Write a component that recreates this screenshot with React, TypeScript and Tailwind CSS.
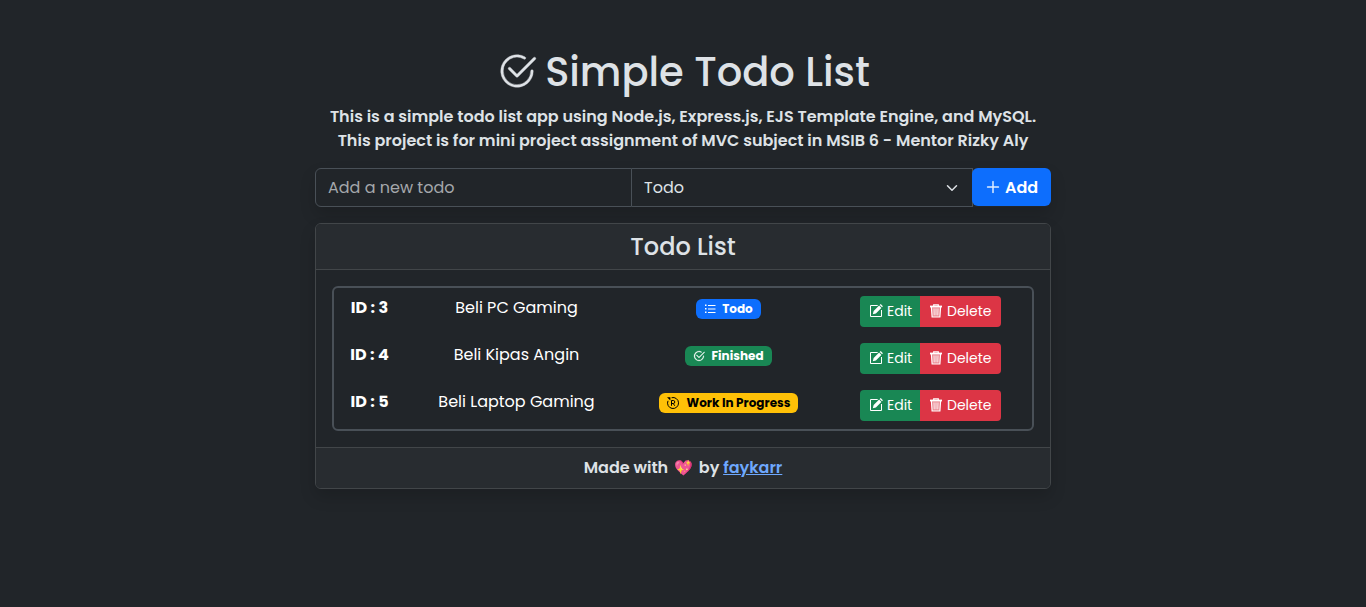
import type { ReactNode } from "react";
import { BsCheck2Circle, BsPlusLg } from "react-icons/bs";

function ProgressIcon() {
  return (
    <svg viewBox="0 0 14 14" className="h-3.5 w-3.5 -translate-x-px" fill="none" stroke="currentColor" strokeWidth="1">
      <path d="M5.6 1.7A5.5 5.5 0 1 1 2 4.8" />
      <path d="M1 1.3h3.4v3.2Z" fill="currentColor" stroke="none" />
      <path d="M5.5 9.8V4.5h1.8a1.5 1.5 0 0 1 0 3H5.5M7.2 7.5L8.8 9.8" />
    </svg>
  );
}

function ListIcon() {
  return (
    <svg viewBox="0 0 12 12" className="size-3" fill="currentColor">
      <path d="M1 1.5h1.5V3H1zM1 5h1.5v1.5H1zM1 8.5h1.5V10H1zM4 2h7.5v1H4zM4 5.5h7.5v1H4zM4 9h7.5v1H4z" />
    </svg>
  );
}

function EditIcon() {
  return (
    <svg viewBox="0 0 14 14" className="size-3.5" fill="none" stroke="currentColor" strokeWidth="1">
      <path d="M8.7 1.5H1.5v11h11V6" />
      <path d="m3.8 10.2.8-3.1L10.1 1.6l2.3 2.3L6.9 9.4Z" fill="currentColor" stroke="none" />
      <path d="m10.7 1 1-.9 2.2 2.2-.9 1Z" fill="currentColor" stroke="none" />
    </svg>
  );
}

function TrashIcon() {
  return (
    <svg viewBox="0 0 14 14" className="size-3.5" fill="none" stroke="currentColor" strokeWidth="1.2">
      <path d="M1 2.5h12" strokeWidth="1.8" />
      <path d="M4.7 2.3V.8h4.6v1.5" />
      <path d="m2.4 3 .7 10h7.8l.7-10" fill="currentColor" fillOpacity=".4" />
      <path d="m5 4.4.2 7M7 4.4v7m2-7-.2 7" strokeWidth=".9" />
    </svg>
  );
}

interface Todo {
  id: number;
  name: string;
  badge: string;
  label: string;
  icon: ReactNode;
}

const todos: Todo[] = [
  { id: 3, name: "Beli PC Gaming", badge: "w-[65px] bg-[#0d6efd] text-white", label: "Todo", icon: <ListIcon /> },
  { id: 4, name: "Beli Kipas Angin", badge: "w-[87px] bg-[#198754] text-white", label: "Finished", icon: <BsCheck2Circle className="size-3" strokeWidth={0.4} /> },
  { id: 5, name: "Beli Laptop Gaming", badge: "w-[139px] bg-[#ffc107] text-black", label: "Work In Progress", icon: <ProgressIcon /> },
];

export default function App() {
  return (
    <main className="min-h-[607px] overflow-hidden bg-[#212529] pt-12 font-['Poppins',Inter,sans-serif] text-base leading-6 text-[#dee2e6] antialiased">
      <div className="mx-auto w-[736px]">
        <h1 className="flex h-12 items-center justify-center gap-[9px] whitespace-nowrap text-[40px] font-medium leading-[48px]">
          <BsCheck2Circle className="size-10 translate-x-px -translate-y-px" strokeWidth={0.15} />
          <span>Simple Todo List</span>
        </h1>
        <p className="mt-[9px] whitespace-nowrap text-center font-semibold">
          <span className="block">This is a simple todo list app using Node.js, Express.js, EJS Template Engine, and MySQL.</span>
          <span className="block">This project is for mini project assignment of MVC subject in MSIB 6 - Mentor Rizky Aly</span>
        </p>
        <div className="mt-[15px] flex h-[39px] items-start rounded-md shadow-[0_8px_16px_rgba(0,0,0,0.15)]">
          <div className="flex h-[39px] w-[317px] items-center rounded-l-md border border-[#495057] pl-3 text-[#a5a8ac]">Add a new todo</div>
          <div className="flex h-[39px] w-[341px] items-center justify-between border border-l-0 border-[#495057] pl-3 pr-3">
            <span>Todo</span>
            <svg viewBox="0 0 16 16" className="h-3 w-4" fill="none" stroke="#dee2e6" strokeWidth="2" strokeLinecap="round" strokeLinejoin="round"><path d="m2 5 6 6 6-6" /></svg>
          </div>
          <button className="-ml-px flex h-[38px] w-[79px] items-center justify-center gap-1 rounded-md bg-[#0d6efd] pt-px font-semibold text-white">
            <BsPlusLg className="size-4 -translate-y-px" strokeWidth={0.3} /><span>Add</span>
          </button>
        </div>
        <section className="mt-4 rounded-md border border-[#424649] shadow-[0_8px_16px_rgba(0,0,0,0.15)]">
          <h2 className="flex h-[46px] items-center justify-center rounded-t-[5px] border-b border-[#424649] bg-[#282c30] text-2xl font-medium">Todo List</h2>
          <div className="px-4 pb-4 pt-4">
            <div className="h-[145px] rounded-md border-2 border-[#495057] text-white">
              {todos.map((t) => (
                <div key={t.id} className="flex h-[47px] items-start">
                  <div className="w-[71px] whitespace-nowrap pt-2 text-center font-bold">ID : {t.id}</div>
                  <div className="w-[223px] whitespace-nowrap pt-2 text-center">{t.name}</div>
                  <div className="flex w-[201px] justify-center pt-[11px]">
                    <span className={`flex h-5 items-center justify-center gap-1.5 whitespace-nowrap rounded-md text-xs font-bold ${t.badge}`}>{t.icon}<span>{t.label}</span></span>
                  </div>
                  <div className="ml-[31px] flex pt-2 text-sm">
                    <button className="flex h-[31px] w-[60px] items-center gap-1 rounded-l bg-[#198754] pb-px pl-[9px]"><EditIcon />Edit</button>
                    <button className="flex h-[31px] w-[81px] items-center gap-1 rounded-r bg-[#dc3545] pb-px pl-[9px]"><TrashIcon />Delete</button>
                  </div>
                </div>
              ))}
            </div>
          </div>
          <footer className="flex h-[41px] items-center justify-center whitespace-pre rounded-b-[5px] border-t border-[#424649] bg-[#282c30] font-semibold">Made with <span className="mx-[2px] text-[15px]">💖</span> by <a className="text-[#6ea8fe] underline">faykarr</a></footer>
        </section>
      </div>
    </main>
  );
}
